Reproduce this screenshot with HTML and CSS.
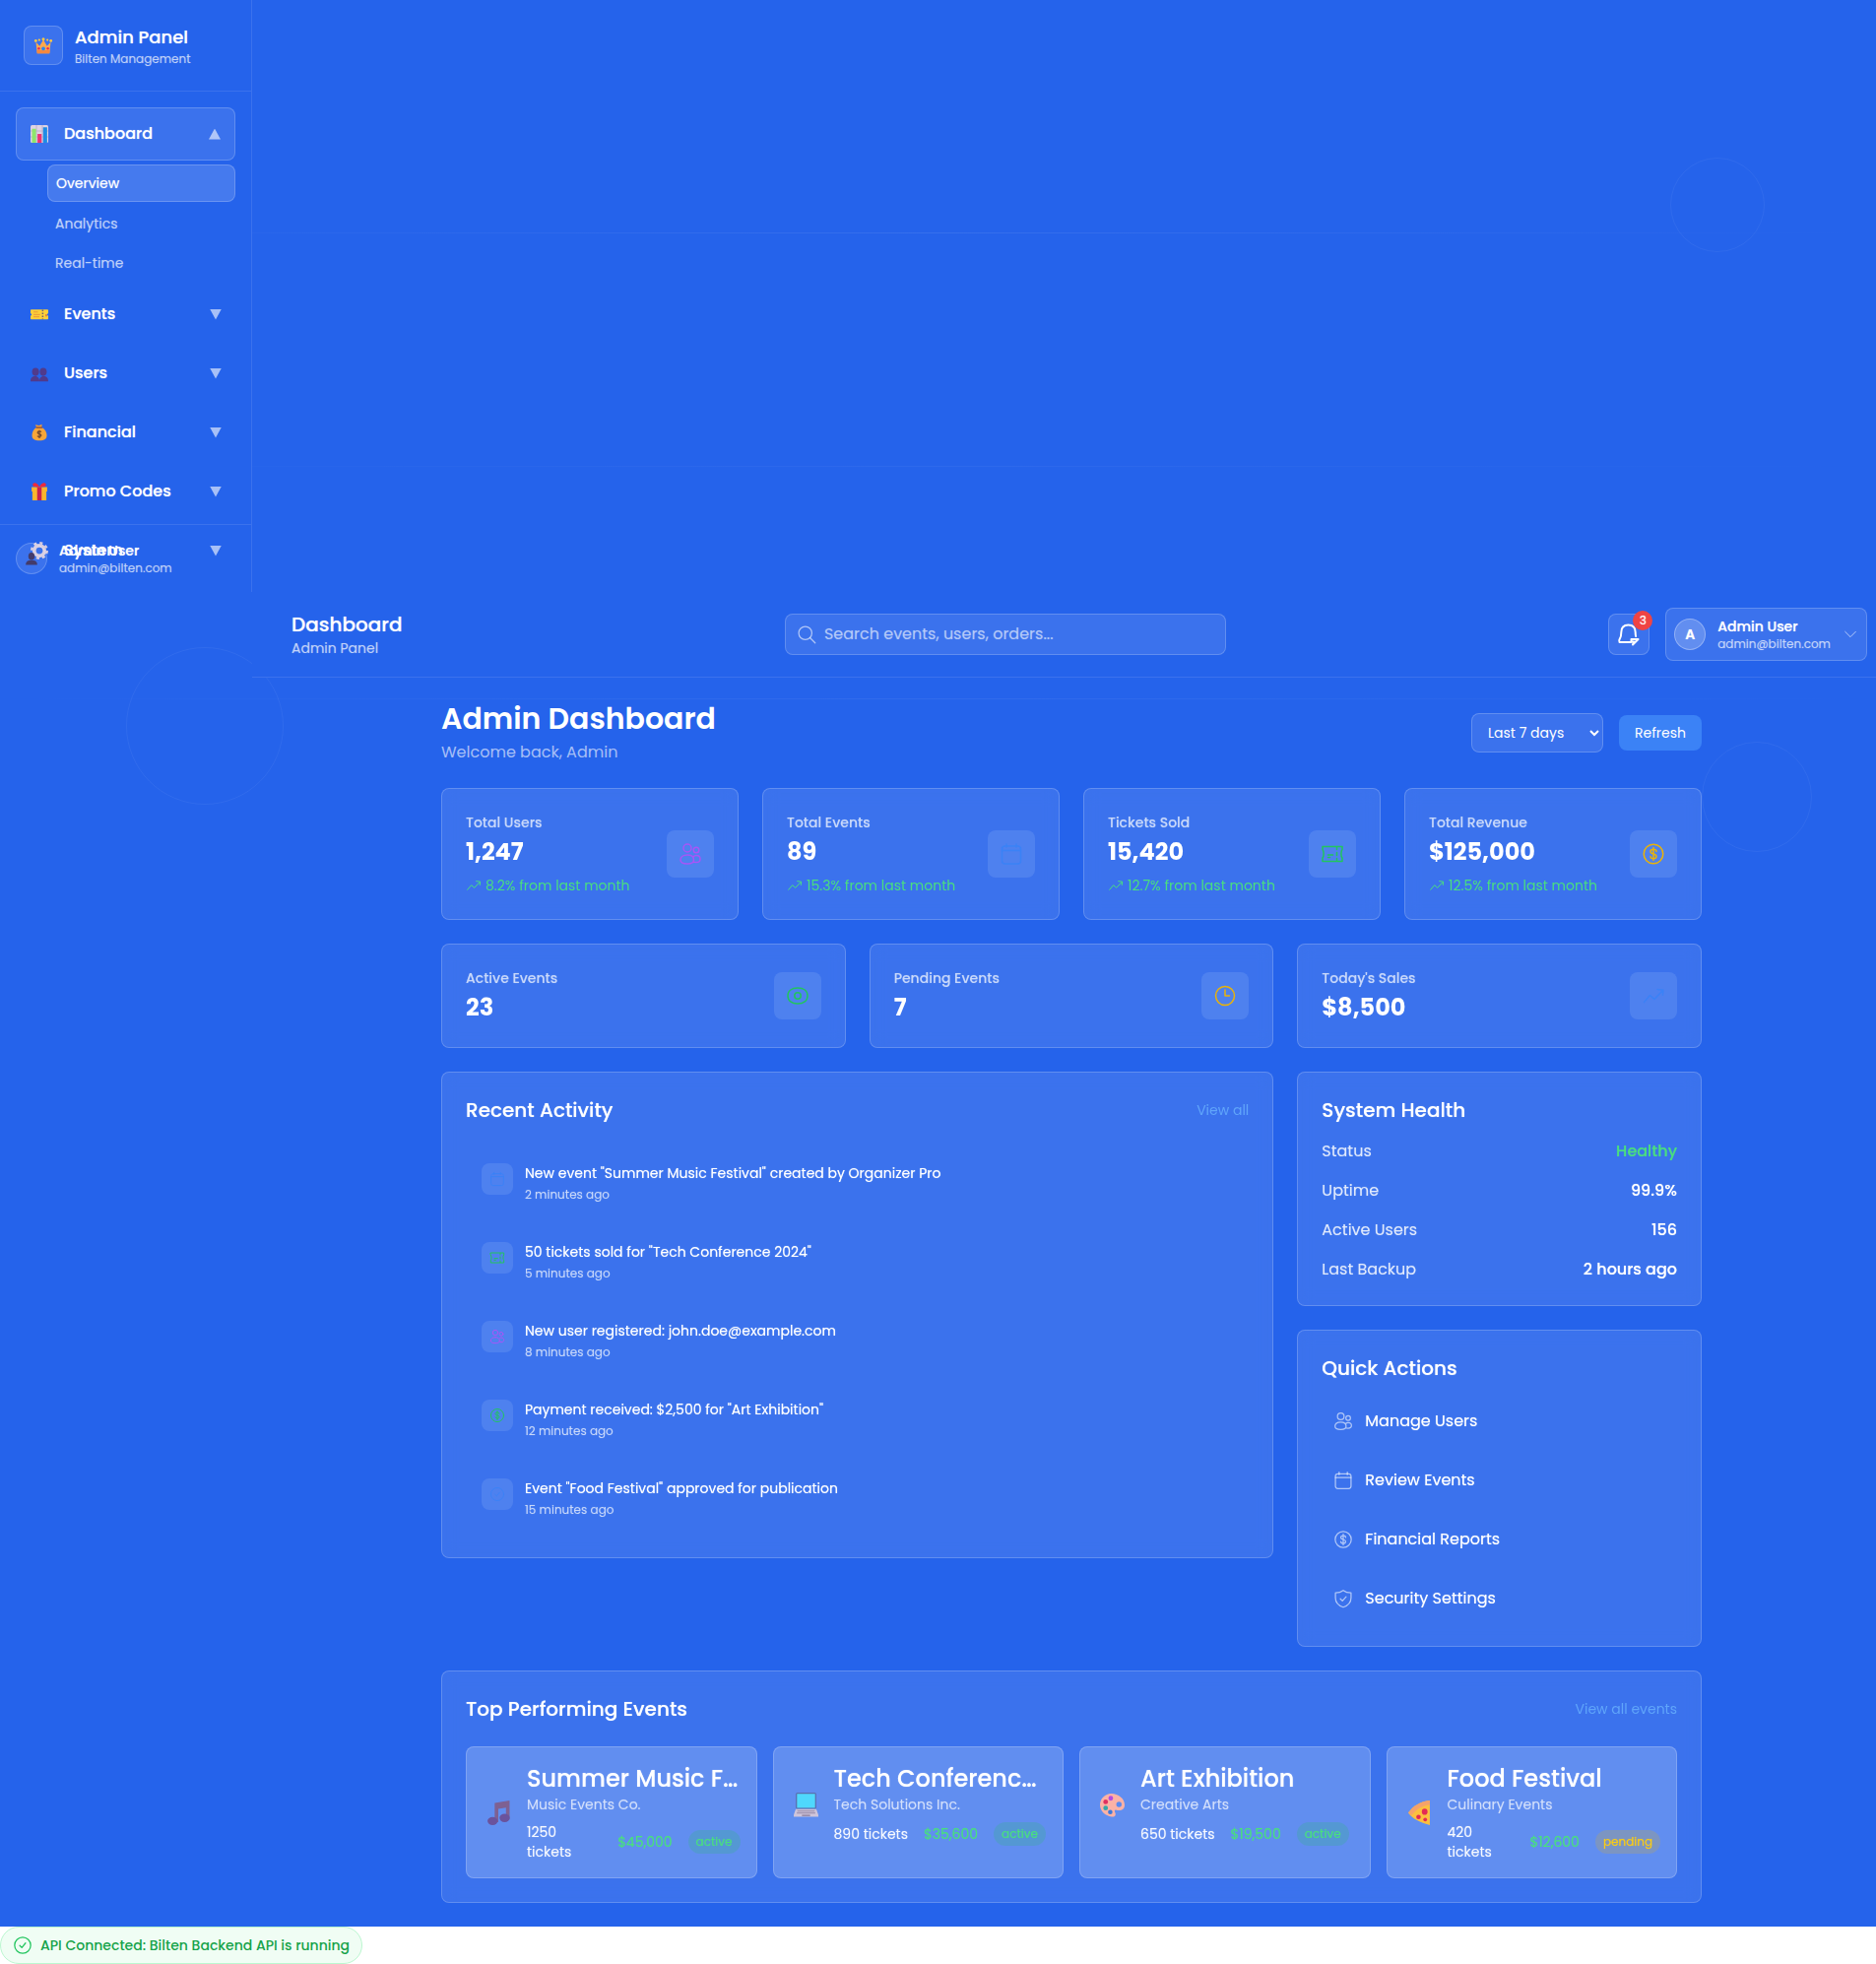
FILE: index.html
```html
<!DOCTYPE html>
<html lang="en">
<head>
<meta charset="utf-8">
<meta name="viewport" content="width=device-width, initial-scale=1">
<title>Admin Dashboard</title>
<link rel="stylesheet" href="styles.css">
</head>
<body>
<svg class="sprite" aria-hidden="true">
  <symbol id="i-users" viewBox="0 0 24 24"><circle cx="9" cy="6" r="4"/><circle cx="18" cy="8" r="2.8"/><path d="M9 13c-4 0-7 2-7 5s3 4 7 4 6.500-1 6.500-4-2.500-5-6.500-5zM15 15c.8-1 2-1.400 3-1.400 2.500 0 4 1.500 4 3.600s-1.500 3.300-4 3.300c-1.200 0-2.300-.2-3-.8"/></symbol>
  <symbol id="i-calendar" viewBox="0 0 24 24"><rect x="2.500" y="4" width="19" height="18" rx="3"/><path d="M2.500 8.500h19M7 2v3M17 2v3"/></symbol>
  <symbol id="i-ticket" viewBox="0 0 24 24"><path d="M2 4.500h20v3c-1.500 1.500-1.500 7 0 8.500v3.500H2V16c1.500-1.500 1.500-7 0-8.500zM16.500 5v2.500M16.500 10.500v3M16.500 16.500v2.500M7.500 13h5M7.500 15.500h2"/></symbol>
  <symbol id="i-dollar" viewBox="0 0 24 24"><circle cx="12" cy="12" r="9.800"/><path d="M15 9.500C15 8 13.700 7.300 12 7.300S9 8 9 9.600s1.200 2 3 2.400 3 .9 3 2.400-1.300 2.300-3 2.300-3-.8-3-2.300M12 5.500v13"/></symbol>
  <symbol id="i-trend" viewBox="0 0 24 24"><path d="M2.500 18.500l6-7 4.500 4 8-8.500M16 5.500l6 .7-.6 5"/></symbol>
  <symbol id="i-eye" viewBox="0 0 24 24"><path d="M2 12c0-5 4-8 10-8s10 3 10 8-4 8-10 8S2 17 2 12z"/><circle cx="12" cy="12" r="3.200"/></symbol>
  <symbol id="i-clock" viewBox="0 0 24 24"><circle cx="12" cy="12" r="9.500"/><path d="M12 6v6h4.500"/></symbol>
  <symbol id="i-check" viewBox="0 0 24 24"><circle cx="12" cy="12" r="9.800"/><path d="M8.500 12.300l2.500 2.500 4.500-5.500"/></symbol>
  <symbol id="i-shield" viewBox="0 0 24 24"><path d="M12 2C9.500 4 6 5 2.500 5v6c0 6 4 9.500 9.500 11.500 5.500-2 9.500-5.500 9.500-11.500V5C18 5 14.500 4 12 2z"/><path d="M8.500 12.300l2.500 2.500 4.500-5"/></symbol>
  <symbol id="i-search" viewBox="0 0 24 24"><circle cx="10.500" cy="10.500" r="8"/><path d="M16.500 16.500l6 6"/></symbol>
  <symbol id="i-bell" viewBox="0 0 24 24"><path d="M14 20H2.500c-.6-1-.6-2 .2-3.200C4 15 4.300 13.500 4.300 10c0-5 3-7.500 7.200-7.500S18.700 5 18.700 10c0 1.700.1 2.900.4 4"/><path d="M16 22.500l1-3h-2.500v-2.500h7z"/></symbol>
  <symbol id="i-chevron" viewBox="0 0 24 24"><path d="M4 8l8 8 8-8"/></symbol>
  <symbol id="e-crown" viewBox="0 0 24 24"><path d="M3 8l4.500 5L12 5l4.500 8L21 8l-1.500 14h-15z" fill="#fda94d"/><path d="M4 18h16l-.5 4h-15z" fill="#f5883f"/><g fill="#ffc940"><circle cx="2.800" cy="6.500" r="1.700"/><circle cx="7" cy="5.500" r="1.300"/><circle cx="12" cy="4.500" r="1.800"/><circle cx="17" cy="5.500" r="1.300"/><circle cx="21.200" cy="6.500" r="1.700"/></g><circle cx="12" cy="16" r="2.300" fill="#2d86ee"/><circle cx="6.500" cy="16" r="1.500" fill="#ea2756"/><circle cx="17.500" cy="16" r="1.500" fill="#ea2756"/></symbol>
  <symbol id="e-chart" viewBox="0 0 24 24"><rect width="24" height="24" rx="2" fill="#ddd3e4"/><path d="M0 8h24M0 16h24M8 0v24M16 0v24" stroke="#b8a9c6"/><rect x="2" y="5" width="5.500" height="19" fill="#8ee66b"/><rect x="9.500" y="12" width="5.500" height="12" fill="#ee3174"/><rect x="17" y="3" width="5.500" height="21" fill="#1f8ce6"/></symbol>
  <symbol id="e-ticket" viewBox="0 0 24 24"><path d="M1 5.500h22a1 1 0 0 1 1 1V11a1.500 1.500 0 0 0 0 3v4a1 1 0 0 1-1 1H1a1 1 0 0 1-1-1v-4a1.500 1.500 0 0 0 0-3V6.500a1 1 0 0 1 1-1z" fill="#fccf38"/><path d="M4 9h6M4 12.500h9M4 15.500h8" stroke="#e8973c" stroke-width="1.300"/><path d="M16.500 6v13" stroke="#6b6470" stroke-width="2" stroke-dasharray="2 2"/><rect x="20" y="12" width="2.500" height="3" fill="#dd863c"/></symbol>
  <symbol id="e-users" viewBox="0 0 24 24"><g fill="#503a8c"><ellipse cx="6.800" cy="10" rx="4.700" ry="5.500"/><ellipse cx="17.200" cy="10" rx="4.700" ry="5.500"/><path d="M0 23c0-5 2.500-7 6-7s6 2 6 7zM12 23c0-5 2.500-7 6-7s6 2 6 7z"/></g></symbol>
  <symbol id="e-user" viewBox="0 0 24 24"><g fill="#433b6b"><ellipse cx="12" cy="8" rx="5.500" ry="6.500"/><path d="M2 23c0-6 4-8 10-8s10 2 10 8z"/></g></symbol>
  <symbol id="e-money" viewBox="0 0 24 24"><path d="M8 5L6.500 1.500l5 1 4-1.500L15 5z" fill="#f39b35"/><path d="M8 5h7c5 3 7 7 7 11 0 5-3 7-10 7S2 21 2 16C2 12 4 8 8 5z" fill="#f6a63a"/><path d="M7.500 5.500h8.500" stroke="#98573c" stroke-width="2"/><path d="M14.500 11.500c-1-1.500-5-1.500-5 .8 0 2.400 5 1.400 5 3.800 0 2.200-4 2.400-5.300.6M12 9v11" stroke="#71472f" stroke-width="1.600" fill="none"/></symbol>
  <symbol id="e-gift" viewBox="0 0 24 24"><path d="M1.500 6h21v6h-1v12h-19V12h-1z" fill="#fbb62e"/><path d="M9 6h6v18H9z" fill="#c92350"/><path d="M12 6C9-1 3-1 3 3c0 2 2 3 9 3zM12 6c3-7 9-7 9-3 0 2-2 3-9 3z" fill="#ee2a3c"/></symbol>
  <symbol id="e-gear" viewBox="0 0 24 24"><circle cx="12" cy="12" r="7" fill="none" stroke="#d5cbe0" stroke-width="5"/><circle cx="12" cy="12" r="10.300" fill="none" stroke="#d5cbe0" stroke-width="3.400" stroke-dasharray="4.050 4.050"/></symbol>
  <symbol id="e-music" viewBox="0 0 24 24"><path d="M8 2.500L22.500 0v18.500H19V7l-7.500 1.200v13H8z" fill="#7e6192"/><ellipse cx="6" cy="20" rx="5" ry="4" fill="#6a539d"/><ellipse cx="17.700" cy="17" rx="5" ry="4" fill="#6a539d"/></symbol>
  <symbol id="e-laptop" viewBox="0 0 24 24"><rect x="2" y="0" width="20" height="16" rx="1.500" fill="#5b6fae"/><rect x="3.200" y="1.200" width="17.600" height="13.600" fill="#4fd8fd"/><path d="M2 16h20l2 5.500v2H0v-2z" fill="#cfc5da"/><path d="M3.500 18h17M3 20h18" stroke="#9689a8"/><path d="M8 21.500h8v1.500H8z" fill="#9689a8"/></symbol>
  <symbol id="e-palette" viewBox="0 0 24 24"><path d="M11 1c7 0 13 5 13 11 0 5-4 6-8 5-2-.5-2 1-1.300 2.500C16 22 14.500 24 11.500 23.500 5 22.500 0 18 0 12 0 6 5 1 11 1z" fill="#fcb2a6"/><circle cx="18.500" cy="11.500" r="2.600" fill="#5b8af0"/><circle cx="10.500" cy="5.500" r="2.300" fill="#b44be0"/><circle cx="5.500" cy="9" r="2.300" fill="#e0305f"/><circle cx="5.500" cy="15" r="2.300" fill="#35a6a8"/><circle cx="10" cy="19" r="2.200" fill="#3b79dc"/></symbol>
  <symbol id="e-pizza" viewBox="0 0 24 24"><path d="M22 0v24C14 22 5 18 1 12 6 5 13 1 22 0z" fill="#fcbf3f"/><path d="M22 0v4C14 5 8 9 4.500 14.500L1 12C6 5 13 1 22 0z" fill="#f5a26b"/><ellipse cx="17" cy="11" rx="2.800" ry="3" fill="#e42a55"/><circle cx="11" cy="16" r="2.200" fill="#e42a55"/><circle cx="17.500" cy="18.500" r="1.800" fill="#e42a55"/></symbol>
</svg>

<div class="app">
  <div class="decor" aria-hidden="true">
    <span class="line line-a"></span><span class="line line-b"></span><span class="line line-c"></span>
    <span class="ring ring-a"></span><span class="ring ring-b"></span><span class="ring ring-c"></span>
  </div>

  <aside class="sidebar">
    <div class="brand">
      <span class="brand-logo"><svg class="s20"><use href="#e-crown"/></svg></span>
      <div><p class="brand-name">Admin Panel</p><p class="tiny">Bilten Management</p></div>
    </div>
    <nav class="nav">
      <div>
        <button class="nav-btn active"><svg class="s18"><use href="#e-chart"/></svg><span class="grow">Dashboard</span><span class="arrow up"></span></button>
        <div class="subnav">
          <a class="current" href="#">Overview</a>
          <a href="#">Analytics</a>
          <a href="#">Real-time</a>
        </div>
      </div>
      <button class="nav-btn"><svg class="s18"><use href="#e-ticket"/></svg><span class="grow">Events</span><span class="arrow"></span></button>
      <button class="nav-btn"><svg class="s18"><use href="#e-users"/></svg><span class="grow">Users</span><span class="arrow"></span></button>
      <button class="nav-btn"><svg class="s18"><use href="#e-money"/></svg><span class="grow">Financial</span><span class="arrow"></span></button>
      <button class="nav-btn"><svg class="s18"><use href="#e-gift"/></svg><span class="grow">Promo Codes</span><span class="arrow"></span></button>
      <button class="nav-btn"><svg class="s18"><use href="#e-gear"/></svg><span class="grow">System</span><span class="arrow"></span></button>
    </nav>
    <div class="sidebar-user">
      <span class="avatar faint"><svg class="s14"><use href="#e-user"/></svg></span>
      <div><p class="user-name">Admin User</p><p class="tiny">admin@bilten.com</p></div>
    </div>
  </aside>

  <div class="main">
    <header class="topbar">
      <div><h2 class="section-title">Dashboard</h2><p class="small muted">Admin Panel</p></div>
      <label class="search"><svg class="icon s20"><use href="#i-search"/></svg><input type="search" placeholder="Search events, users, orders..." aria-label="Search"></label>
      <div class="topbar-actions">
        <button class="bell" aria-label="Notifications"><svg class="icon heavy s24"><use href="#i-bell"/></svg><span class="count">3</span></button>
        <button class="profile"><span class="avatar">A</span><span class="profile-text"><span class="user-name">Admin User</span><span class="tiny">admin@bilten.com</span></span><svg class="icon s16 dim"><use href="#i-chevron"/></svg></button>
      </div>
    </header>

    <main class="content">
      <div class="page-head">
        <div><h1>Admin Dashboard</h1><p class="welcome">Welcome back, Admin</p></div>
        <div class="page-tools">
          <select aria-label="Period"><option>Last 7 days</option><option>Last 30 days</option></select>
          <button class="refresh">Refresh</button>
        </div>
      </div>

      <section class="grid four">
        <article class="card stat"><div><p class="label">Total Users</p><p class="value">1,247</p><p class="change"><svg class="icon s16"><use href="#i-trend"/></svg>8.2% from last month</p></div><span class="tile purple"><svg class="icon s24"><use href="#i-users"/></svg></span></article>
        <article class="card stat"><div><p class="label">Total Events</p><p class="value">89</p><p class="change"><svg class="icon s16"><use href="#i-trend"/></svg>15.3% from last month</p></div><span class="tile blue"><svg class="icon s24"><use href="#i-calendar"/></svg></span></article>
        <article class="card stat"><div><p class="label">Tickets Sold</p><p class="value">15,420</p><p class="change"><svg class="icon s16"><use href="#i-trend"/></svg>12.7% from last month</p></div><span class="tile green"><svg class="icon s24"><use href="#i-ticket"/></svg></span></article>
        <article class="card stat"><div><p class="label">Total Revenue</p><p class="value">$125,000</p><p class="change"><svg class="icon s16"><use href="#i-trend"/></svg>12.5% from last month</p></div><span class="tile yellow"><svg class="icon s24"><use href="#i-dollar"/></svg></span></article>
      </section>

      <section class="grid three">
        <article class="card stat"><div><p class="label">Active Events</p><p class="value">23</p></div><span class="tile green"><svg class="icon s24"><use href="#i-eye"/></svg></span></article>
        <article class="card stat"><div><p class="label">Pending Events</p><p class="value">7</p></div><span class="tile yellow"><svg class="icon s24"><use href="#i-clock"/></svg></span></article>
        <article class="card stat"><div><p class="label">Today's Sales</p><p class="value">$8,500</p></div><span class="tile blue"><svg class="icon s24"><use href="#i-trend"/></svg></span></article>
      </section>

      <section class="grid three">
        <article class="card wide">
          <div class="card-head"><h2 class="section-title">Recent Activity</h2><a href="#">View all</a></div>
          <ul class="activity">
            <li><span class="tile sm blue"><svg class="icon s16"><use href="#i-calendar"/></svg></span><div><p class="small">New event "Summer Music Festival" created by Organizer Pro</p><p class="tiny">2 minutes ago</p></div></li>
            <li><span class="tile sm green"><svg class="icon s16"><use href="#i-ticket"/></svg></span><div><p class="small">50 tickets sold for "Tech Conference 2024"</p><p class="tiny">5 minutes ago</p></div></li>
            <li><span class="tile sm purple"><svg class="icon s16"><use href="#i-users"/></svg></span><div><p class="small">New user registered: john.doe@example.com</p><p class="tiny">8 minutes ago</p></div></li>
            <li><span class="tile sm green"><svg class="icon s16"><use href="#i-dollar"/></svg></span><div><p class="small">Payment received: $2,500 for "Art Exhibition"</p><p class="tiny">12 minutes ago</p></div></li>
            <li><span class="tile sm blue"><svg class="icon s16"><use href="#i-check"/></svg></span><div><p class="small">Event "Food Festival" approved for publication</p><p class="tiny">15 minutes ago</p></div></li>
          </ul>
        </article>
        <div class="side">
          <article class="card">
            <h2 class="section-title">System Health</h2>
            <dl class="health">
              <div><dt>Status</dt><dd class="ok">Healthy</dd></div>
              <div><dt>Uptime</dt><dd>99.9%</dd></div>
              <div><dt>Active Users</dt><dd>156</dd></div>
              <div><dt>Last Backup</dt><dd>2 hours ago</dd></div>
            </dl>
          </article>
          <article class="card">
            <h2 class="section-title">Quick Actions</h2>
            <div class="actions">
              <button><svg class="icon s20"><use href="#i-users"/></svg>Manage Users</button>
              <button><svg class="icon s20"><use href="#i-calendar"/></svg>Review Events</button>
              <button><svg class="icon s20"><use href="#i-dollar"/></svg>Financial Reports</button>
              <button><svg class="icon s20"><use href="#i-shield"/></svg>Security Settings</button>
            </div>
          </article>
        </div>
      </section>

      <section class="card">
        <div class="card-head"><h2 class="section-title">Top Performing Events</h2><a href="#">View all events</a></div>
        <div class="events">
          <article class="event"><svg class="emoji"><use href="#e-music"/></svg><div class="event-body"><h3>Summer Music Festival</h3><p class="small muted">Music Events Co.</p><p class="meta"><span class="sold">1250 tickets</span><span class="money">$45,000</span><span class="pill">active</span></p></div></article>
          <article class="event"><svg class="emoji"><use href="#e-laptop"/></svg><div class="event-body"><h3>Tech Conference 2024</h3><p class="small muted">Tech Solutions Inc.</p><p class="meta"><span class="sold">890 tickets</span><span class="money">$35,600</span><span class="pill">active</span></p></div></article>
          <article class="event"><svg class="emoji"><use href="#e-palette"/></svg><div class="event-body"><h3>Art Exhibition</h3><p class="small muted">Creative Arts</p><p class="meta"><span class="sold">650 tickets</span><span class="money">$19,500</span><span class="pill">active</span></p></div></article>
          <article class="event"><svg class="emoji"><use href="#e-pizza"/></svg><div class="event-body"><h3>Food Festival</h3><p class="small muted">Culinary Events</p><p class="meta"><span class="sold">420 tickets</span><span class="money">$12,600</span><span class="pill pending">pending</span></p></div></article>
        </div>
      </section>
    </main>
  </div>
</div>
<div class="api-status" role="status"><svg class="icon s20"><use href="#i-check"/></svg>API Connected: Bilten Backend API is running</div>
</body>
</html>
```
FILE: styles.css
```css
*, *::before, *::after { box-sizing: border-box; }
body, h1, h2, h3, p, ul, dl, dd { margin: 0; }
ul { padding: 0; list-style: none; }
body { font: 400 16px/24px Poppins, Inter, "Open Sans", sans-serif; color: #fff; background: #fff; }
button, input, select { font: inherit; color: inherit; margin: 0; text-shadow: inherit; }
button { cursor: pointer; background: none; border: 0; padding: 0; text-align: left; }
a { color: #60a5fa; text-decoration: none; }
svg { flex: none; display: block; }
.sprite { position: absolute; width: 0; height: 0; }
.icon { fill: none; stroke: currentColor; stroke-width: 1.5; stroke-linecap: round; stroke-linejoin: round; }
.heavy { stroke-width: 2; }
.s14 { width: 14px; height: 14px; }
.s16 { width: 16px; height: 16px; }
.s18 { width: 18px; height: 18px; }
.s20 { width: 20px; height: 20px; }
.s24 { width: 24px; height: 24px; }
.emoji { width: 33px; height: 25px; }
.grow { flex: 1; }
.small { font-size: 14px; line-height: 20px; }
.tiny { font-size: 12px; line-height: 16px; color: rgba(255,255,255,.6); }
.muted, .dim { color: rgba(255,255,255,.6); }

.app { position: relative; background: #2563eb; }
.decor { position: absolute; inset: 0; overflow: hidden; }
.line { position: absolute; left: 0; right: 0; height: 1px; background: linear-gradient(90deg, transparent, rgba(255,255,255,.08) 50%, transparent); }
.line-a { top: 236px; }
.line-b { top: 473px; opacity: .5; }
.line-c { top: 709px; opacity: .7; }
.ring { position: absolute; border: 1px solid rgba(255,255,255,.05); border-radius: 50%; }
.ring-a { top: 160px; right: 113px; width: 96px; height: 96px; }
.ring-b { top: 657px; left: 128px; width: 160px; height: 160px; }
.ring-c { top: 753px; right: 65px; width: 112px; height: 112px; }

/* Glass surfaces: translucent panels with slightly glowing text */
.sidebar, .topbar, .card { backdrop-filter: blur(8px); text-shadow: 0 0 1px color-mix(in srgb, currentColor 60%, transparent); }

.sidebar { position: relative; width: 256px; background: #2563eb; border-right: 1px solid rgba(255,255,255,.1); }
.brand { display: flex; align-items: center; gap: 12px; padding: 24px; border-bottom: 1px solid rgba(255,255,255,.1); }
.brand-logo { width: 40px; height: 40px; display: grid; place-items: center; border: 1px solid rgba(255,255,255,.2); border-radius: 8px; background: rgba(255,255,255,.1); }
.brand-name { font-size: 18px; line-height: 28px; font-weight: 500; }
.nav { display: flex; flex-direction: column; gap: 8px; padding: 16px; }
.nav-btn { display: flex; align-items: center; gap: 16px; width: 100%; padding: 14px 14px 14px 15px; border-radius: 8px; font-weight: 500; }
.nav-btn.active { padding-left: 14px; border: 1px solid rgba(255,255,255,.2); background: rgba(255,255,255,.1); }
.arrow { width: 12px; height: 11px; background: rgba(255,255,255,.6); clip-path: polygon(0 0, 100% 0, 50% 100%); }
.arrow.up { clip-path: polygon(50% 0, 100% 100%, 0 100%); }
.subnav { display: grid; gap: 4px; margin: 4px 0 0 32px; }
.subnav a { padding: 8px; border-radius: 8px; font-size: 14px; line-height: 20px; color: rgba(255,255,255,.6); }
.subnav .current { color: #fff; border: 1px solid rgba(255,255,255,.2); background: rgba(255,255,255,.15); }
.sidebar-user { position: absolute; left: 0; right: 0; bottom: 0; display: flex; align-items: center; gap: 12px; padding: 16px; border-top: 1px solid rgba(255,255,255,.1); }
.avatar { width: 32px; height: 32px; display: grid; place-items: center; border: 1px solid rgba(255,255,255,.3); border-radius: 50%; background: rgba(255,255,255,.2); font-size: 14px; font-weight: 600; }
.avatar.faint { background: rgba(255,255,255,.1); border-color: rgba(255,255,255,.2); }
.user-name { font-size: 14px; line-height: 20px; font-weight: 500; }

.main { position: relative; margin-left: 256px; }
.topbar { display: flex; align-items: center; justify-content: space-between; padding: 16px 9px 16px 40px; background: #2563eb; border-bottom: 1px solid rgba(255,255,255,.1); }
.section-title { font-size: 20px; line-height: 28px; font-weight: 500; }
.search { display: flex; align-items: center; gap: 8px; width: 448px; height: 42px; padding: 0 11px; border: 1px solid rgba(255,255,255,.2); border-radius: 8px; background: rgba(255,255,255,.1); color: rgba(255,255,255,.6); }
.search input { flex: 1; min-width: 0; padding: 0; border: 0; outline: 0; background: none; }
.search input::placeholder { color: rgba(255,255,255,.5); }
.topbar-actions { display: flex; align-items: center; gap: 16px; }
.bell { position: relative; display: grid; place-items: center; width: 42px; height: 42px; border: 1px solid rgba(255,255,255,.2); border-radius: 8px; background: rgba(255,255,255,.1); }
.count { position: absolute; top: -4px; right: -4px; width: 20px; height: 20px; border-radius: 50%; background: #ef4444; font-size: 12px; line-height: 20px; text-align: center; }
.profile { display: flex; align-items: center; gap: 12px; padding: 8px; border: 1px solid rgba(255,255,255,.2); border-radius: 8px; background: rgba(255,255,255,.1); }
.profile-text { display: grid; }

.content { max-width: 1343px; margin: 0 auto; padding: 24px 24px 24px 39px; display: grid; gap: 24px; }
.page-head, .card-head, .stat { display: flex; align-items: center; justify-content: space-between; }
h1 { font-size: 30px; line-height: 36px; font-weight: 600; }
.welcome { margin-top: 4px; color: rgba(255,255,255,.6); }
.page-tools { display: flex; align-items: center; gap: 16px; font-size: 14px; line-height: 20px; }
select { width: 134px; height: 40px; padding: 0 0 0 12px; border: 1px solid rgba(255,255,255,.2); border-radius: 8px; background: rgba(255,255,255,.1); }
option { color: #111; }
.refresh { padding: 8px 16px; border-radius: 8px; background: #3b82f6; }
.grid { display: grid; gap: 24px; align-items: start; }
.four { grid-template-columns: repeat(4, minmax(0, 1fr)); }
.three { grid-template-columns: repeat(3, minmax(0, 1fr)); }
.wide { grid-column: span 2; }
.side { display: grid; gap: 24px; }
.card { padding: 24px; border: 1px solid rgba(255,255,255,.2); border-radius: 8px; background: rgba(255,255,255,.1); }
.label { font-size: 14px; line-height: 20px; font-weight: 500; color: rgba(255,255,255,.6); }
.value { margin-top: 4px; font-size: 24px; line-height: 32px; font-weight: 700; text-shadow: none; }
.change { display: flex; align-items: center; gap: 4px; margin-top: 8px; font-size: 14px; line-height: 20px; color: #4ade80; text-shadow: none; }
.tile { flex: none; width: 48px; height: 48px; display: grid; place-items: center; border-radius: 8px; background: rgba(255,255,255,.1); }
.tile.sm { width: 32px; height: 32px; }
.purple { color: #a855f7; }
.blue { color: #3b82f6; }
.green { color: #22c55e; }
.yellow { color: #eab308; }
.card-head { margin-bottom: 24px; }
.card-head a { font-size: 14px; line-height: 20px; text-shadow: none; }
.activity { display: grid; gap: 8px; }
.activity li { display: flex; gap: 12px; padding: 16px; }
.activity .tiny { margin-top: 4px; }
.health { display: grid; gap: 16px; margin-top: 16px; }
.health div { display: flex; justify-content: space-between; }
.health dt { color: rgba(255,255,255,.75); }
.health dd { font-weight: 500; }
.health .ok { color: #4ade80; }
.actions { display: grid; gap: 12px; margin-top: 16px; }
.actions button { display: flex; align-items: center; gap: 12px; padding: 12px; }
.actions .icon { color: rgba(255,255,255,.6); }
.events { display: grid; grid-template-columns: repeat(4, minmax(0, 1fr)); grid-auto-rows: 1fr; gap: 16px; }
.event { display: grid; grid-template-columns: auto minmax(0, 1fr); align-items: center; align-content: start; gap: 12px; padding: 16px; border: 1px solid rgba(255,255,255,.2); border-radius: 8px; background: rgba(255,255,255,.2); }
h3 { font-size: 24px; line-height: 32px; font-weight: 500; overflow: hidden; white-space: nowrap; text-overflow: ellipsis; }
.meta { display: flex; align-items: center; gap: 16px; margin-top: 8px; font-size: 14px; line-height: 20px; }
.sold { color: rgba(255,255,255,.9); }
.money { color: #4ade80; }
.pill { padding: 4px 8px; border-radius: 12px; font-size: 12px; line-height: 16px; color: #4ade80; background: rgba(34,197,94,.2); }
.pending { color: #facc15; background: rgba(234,179,8,.2); }

.api-status { display: flex; align-items: center; gap: 8px; width: max-content; padding: 8px 12px; border: 1px solid #bbf7d0; border-radius: 19px; background: #f0fdf4; color: #16a34a; font-size: 14px; line-height: 20px; font-weight: 500; }
.api-status .icon { color: #22c55e; }
```
